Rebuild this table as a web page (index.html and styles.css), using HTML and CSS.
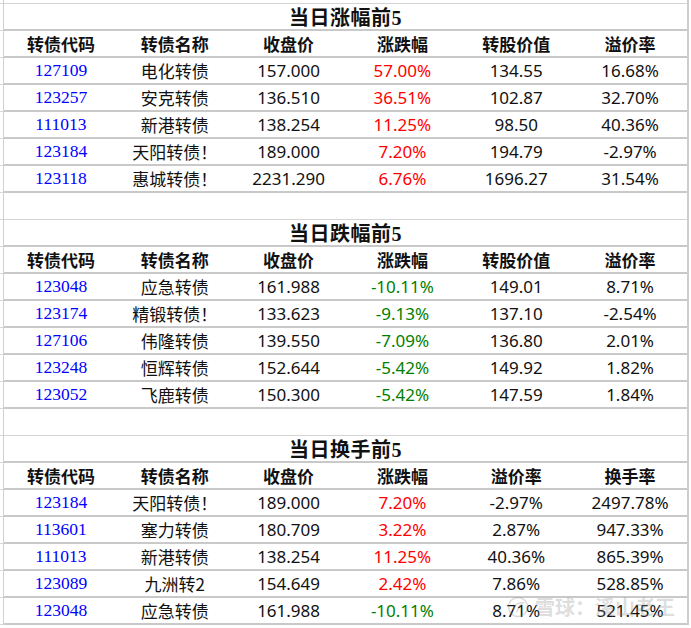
FILE: index.html
```html
<!DOCTYPE html>
<html lang="zh-CN">
<head>
<meta charset="utf-8">
<title>可转债排行</title>
<link rel="stylesheet" href="styles.css">
</head>
<body>
<div class="sheet">
  <div class="row top"><div class="gutter"></div><div class="cells thin"></div></div>

  <div class="row"><div class="gutter"></div><div class="cells title"><span>当日涨幅前5</span></div></div>
  <div class="row"><div class="gutter"></div><div class="cells head">
    <span>转债代码</span><span>转债名称</span><span>收盘价</span><span>涨跌幅</span><span>转股价值</span><span>溢价率</span></div></div>
  <div class="row"><div class="gutter"></div><div class="cells data">
    <span class="code">127109</span><span class="name">电化转债</span><span>157.000</span><span class="up">57.00%</span><span>134.55</span><span>16.68%</span></div></div>
  <div class="row"><div class="gutter"></div><div class="cells data">
    <span class="code">123257</span><span class="name">安克转债</span><span>136.510</span><span class="up">36.51%</span><span>102.87</span><span>32.70%</span></div></div>
  <div class="row"><div class="gutter"></div><div class="cells data">
    <span class="code">111013</span><span class="name">新港转债</span><span>138.254</span><span class="up">11.25%</span><span>98.50</span><span>40.36%</span></div></div>
  <div class="row"><div class="gutter"></div><div class="cells data">
    <span class="code">123184</span><span class="name">天阳转债！</span><span>189.000</span><span class="up">7.20%</span><span>194.79</span><span>-2.97%</span></div></div>
  <div class="row"><div class="gutter"></div><div class="cells data">
    <span class="code">123118</span><span class="name">惠城转债！</span><span>2231.290</span><span class="up">6.76%</span><span>1696.27</span><span>31.54%</span></div></div>
  <div class="row"><div class="gutter"></div><div class="cells thin"></div></div>

  <div class="row"><div class="gutter"></div><div class="cells title"><span>当日跌幅前5</span></div></div>
  <div class="row"><div class="gutter"></div><div class="cells head">
    <span>转债代码</span><span>转债名称</span><span>收盘价</span><span>涨跌幅</span><span>转股价值</span><span>溢价率</span></div></div>
  <div class="row"><div class="gutter"></div><div class="cells data">
    <span class="code">123048</span><span class="name">应急转债</span><span>161.988</span><span class="down">-10.11%</span><span>149.01</span><span>8.71%</span></div></div>
  <div class="row"><div class="gutter"></div><div class="cells data">
    <span class="code">123174</span><span class="name">精锻转债！</span><span>133.623</span><span class="down">-9.13%</span><span>137.10</span><span>-2.54%</span></div></div>
  <div class="row"><div class="gutter"></div><div class="cells data">
    <span class="code">127106</span><span class="name">伟隆转债</span><span>139.550</span><span class="down">-7.09%</span><span>136.80</span><span>2.01%</span></div></div>
  <div class="row"><div class="gutter"></div><div class="cells data">
    <span class="code">123248</span><span class="name">恒辉转债</span><span>152.644</span><span class="down">-5.42%</span><span>149.92</span><span>1.82%</span></div></div>
  <div class="row"><div class="gutter"></div><div class="cells data">
    <span class="code">123052</span><span class="name">飞鹿转债</span><span>150.300</span><span class="down">-5.42%</span><span>147.59</span><span>1.84%</span></div></div>
  <div class="row"><div class="gutter"></div><div class="cells thin"></div></div>

  <div class="row"><div class="gutter"></div><div class="cells title"><span>当日换手前5</span></div></div>
  <div class="row"><div class="gutter"></div><div class="cells head">
    <span>转债代码</span><span>转债名称</span><span>收盘价</span><span>涨跌幅</span><span>溢价率</span><span>换手率</span></div></div>
  <div class="row"><div class="gutter"></div><div class="cells data">
    <span class="code">123184</span><span class="name">天阳转债！</span><span>189.000</span><span class="up">7.20%</span><span>-2.97%</span><span>2497.78%</span></div></div>
  <div class="row"><div class="gutter"></div><div class="cells data">
    <span class="code">113601</span><span class="name">塞力转债</span><span>180.709</span><span class="up">3.22%</span><span>2.87%</span><span>947.33%</span></div></div>
  <div class="row"><div class="gutter"></div><div class="cells data">
    <span class="code">111013</span><span class="name">新港转债</span><span>138.254</span><span class="up">11.25%</span><span>40.36%</span><span>865.39%</span></div></div>
  <div class="row"><div class="gutter"></div><div class="cells data">
    <span class="code">123089</span><span class="name">九洲转2</span><span>154.649</span><span class="up">2.42%</span><span>7.86%</span><span>528.85%</span></div></div>
  <div class="row"><div class="gutter"></div><div class="cells data">
    <span class="code">123048</span><span class="name">应急转债</span><span>161.988</span><span class="down">-10.11%</span><span>8.71%</span><span>521.45%</span></div></div>

  <div class="watermark">
    <svg class="wm-logo" width="22" height="24" viewBox="0 0 22 24" aria-hidden="true">
      <circle cx="11" cy="12" r="9.5" fill="none" stroke="currentColor" stroke-width="1.6"/>
      <path d="M6 15 C8 9 12 7 16 8 C13 10 11 13 10 17" fill="none" stroke="currentColor" stroke-width="1.6"/>
    </svg>
    <span>雪球：溪山老王</span>
  </div>
</div>
</body>
</html>
```

FILE: styles.css
```css
html, body {
  margin: 0;
  padding: 0;
  background: #ffffff;
}

.sheet {
  position: relative;
  width: 689px;
  border-right: 2px solid #cdcdcd;
  box-sizing: border-box;
  font-family: "Noto Sans", "Noto Sans CJK SC", sans-serif;
  color: #111111;
}

.row {
  display: flex;
  height: 27px;
}

.row.top {
  height: 4px;
}

.gutter {
  width: 4px;
  flex: none;
  border-right: 1px solid #d0d0d0;
  border-bottom: 1px solid #d8d8d8;
  box-sizing: border-box;
}

.cells {
  flex: 1;
  box-sizing: border-box;
  border-bottom: 2px solid #c9c9c9;
  display: grid;
  grid-template-columns: repeat(6, 1fr);
  align-items: center;
}

.cells.thin {
  border-bottom: 1px solid #d4d4d4;
}

.cells > span {
  text-align: center;
  white-space: nowrap;
  line-height: 25px;
}

.cells.title {
  display: flex;
  justify-content: center;
  padding-top: 3px;
}

.cells.title > span {
  font-family: "Liberation Serif", "Noto Sans CJK SC", serif;
  font-weight: 600;
  font-size: 20px;
  line-height: 22px;
  letter-spacing: 0.5px;
}

.cells.head > span {
  font-family: "Noto Sans CJK SC", sans-serif;
  font-weight: 700;
  font-size: 17px;
}

.cells.data > span {
  font-size: 17px;
}

.cells.data > .code {
  font-family: "Liberation Serif", serif;
  color: #0000ff;
  font-size: 17.5px;
}

.cells.data > .name {
  font-family: "Noto Sans CJK SC", sans-serif;
  font-size: 17px;
}

.up {
  color: #ff0000;
}

.down {
  color: #008000;
}

.watermark {
  position: absolute;
  left: 507px;
  top: 594px;
  display: flex;
  align-items: center;
  gap: 6px;
  color: rgba(140, 140, 140, 0.3);
  font-family: "Noto Sans CJK SC", sans-serif;
  font-size: 20px;
  line-height: 26px;
  font-weight: 700;
  pointer-events: none;
}

.wm-logo {
  display: block;
}
```
